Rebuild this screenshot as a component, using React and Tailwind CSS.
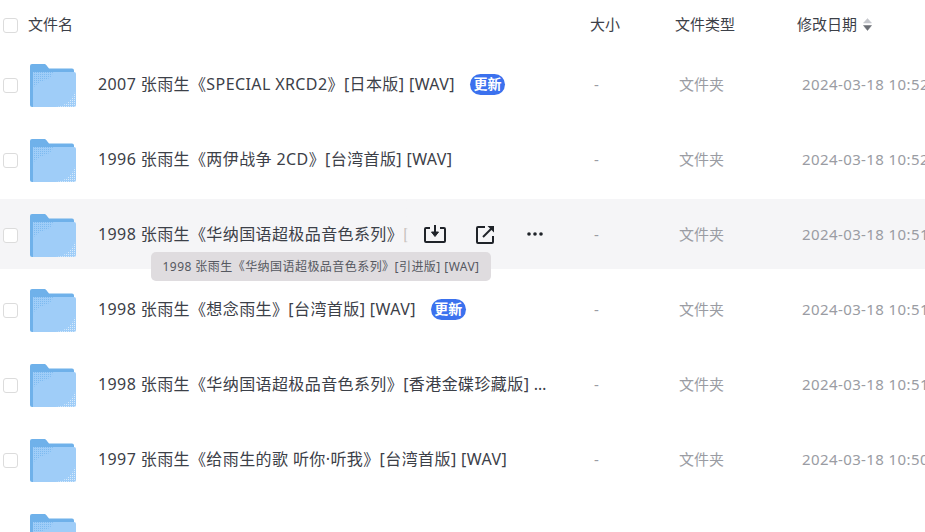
const FONT = '"Noto Sans","Noto Sans CJK SC",sans-serif';

const rows = [
  { name: "2007 张雨生《SPECIAL XRCD2》[日本版] [WAV]", date: "2024-03-18 10:52", badge: true },
  { name: "1996 张雨生《两伊战争 2CD》[台湾首版] [WAV]", date: "2024-03-18 10:52" },
  { name: "1998 张雨生《华纳国语超极品音色系列》[引进版] [WAV]", date: "2024-03-18 10:51", hover: true },
  { name: "1998 张雨生《想念雨生》[台湾首版] [WAV]", date: "2024-03-18 10:51", badge: true },
  { name: "1998 张雨生《华纳国语超极品音色系列》[香港金碟珍藏版] [WAV]", date: "2024-03-18 10:51" },
  { name: "1997 张雨生《给雨生的歌 听你·听我》[台湾首版] [WAV]", date: "2024-03-18 10:50" },
];

function Folder() {
  return (
    <svg width="46" height="43" viewBox="0 0 46 43" className="shrink-0 mt-[2px]">
      <defs>
        <pattern id="dots" width="2" height="2" patternUnits="userSpaceOnUse">
          <rect width="1" height="1" fill="#7dbaf0" />
        </pattern>
        <pattern id="dotsw" width="2" height="2" patternUnits="userSpaceOnUse">
          <rect width="1" height="1" fill="#d6eafc" />
        </pattern>
      </defs>
      <path d="M0 2a2 2 0 0 1 2-2h12c1.500 0 2 .5 3 2l2 2.500h23a2 2 0 0 1 2 2V12H0Z" fill="#6fb1ea" />
      <path d="M3 8h41a2 2 0 0 1 2 2v31a2 2 0 0 1-2 2H3Z" fill="#9fcdf8" />
      <path d="M0 2h3v41H2a2 2 0 0 1-2-2Z" fill="#6fb1ea" />
      <path d="M3 8h20q-1 6-8 8t-12 8Z" fill="url(#dots)" />
      <path d="M46 26v14a3 3 0 0 1-3 3H26q8-1 13-6t7-11Z" fill="url(#dotsw)" />
    </svg>
  );
}

function Check() {
  return <span className="block w-[15px] h-[15px] mt-[2px] shrink-0 rounded-[3px] border border-[#dcdcdc] bg-white" />;
}

function Badge() {
  return (
    <span className="ml-[15px] flex items-center justify-center w-[35px] h-[21px] rounded-full bg-[#3b71ee] text-white text-[14px] tracking-normal font-bold leading-none">
      更新
    </span>
  );
}

function Actions() {
  return (
    <div className="absolute left-[398px] top-0 h-full w-[162px] flex items-center">
      <div className="absolute left-0 top-0 h-full w-[10px] bg-linear-to-r from-[#f5f5f700] to-[#f5f5f7]" />
      <div className="absolute left-[10px] top-0 h-full right-0 bg-[#f5f5f7]" />
      <div className="relative flex items-center pl-[26px]">
        <svg width="22" height="20" viewBox="0 0 22 20" fill="none" stroke="#1f2329" strokeWidth="2" className="shrink-0">
          <path d="M6 4H2a1 1 0 0 0-1 1v12a1 1 0 0 0 1 1h18a1 1 0 0 0 1-1V5a1 1 0 0 0-1-1h-4" />
          <path d="M11 1v9" />
          <path d="M7.500 8h7L11 12.500Z" fill="#1f2329" strokeWidth="1" />
        </svg>
        <svg width="19" height="19" viewBox="0 0 19 19" fill="none" stroke="#1f2329" strokeWidth="2" className="ml-[30px] shrink-0">
          <path d="M9 2H2a1 1 0 0 0-1 1v14a1 1 0 0 0 1 1h14a1 1 0 0 0 1-1v-6" />
          <path d="M7 12 17 2" />
          <path d="M11.500 1H18v6.500Z" fill="#1f2329" stroke="none" />
        </svg>
        <svg width="16" height="4" viewBox="0 0 16 4" fill="#1f2329" className="ml-[32px] shrink-0">
          <circle cx="2" cy="2" r="1.800" />
          <circle cx="8" cy="2" r="1.800" />
          <circle cx="14" cy="2" r="1.800" />
        </svg>
      </div>
    </div>
  );
}

function Row({ r }) {
  return (
    <div className={`relative h-[70px] shrink-0 flex items-center ${r.hover ? "bg-[#f5f5f7]" : "bg-white"}`}>
      <div className="w-[30px] pl-[3px] shrink-0"><Check /></div>
      <div className="w-[68px] shrink-0 flex items-center"><Folder /></div>
      <div className="w-[492px] shrink-0 flex items-center text-[16px] tracking-[0.4px] text-[#3c4048]">
        {r.badge ? (
          <span className="whitespace-nowrap">{r.name}</span>
        ) : (
          <span className="block w-[449px] truncate whitespace-nowrap">{r.name}</span>
        )}
        {r.badge && <Badge />}
      </div>
      <div className="w-[85px] shrink-0 pl-[4px] text-[15px] text-[#9a9ca3]">-</div>
      <div className="w-[122px] shrink-0 pl-[4px] text-[15px] text-[#9a9ca3]">文件夹</div>
      <div className="pl-[5px] text-[15px] tracking-[0.4px] text-[#9a9ca3] whitespace-nowrap">{r.date}</div>
      {r.hover && <Actions />}
      {r.hover && (
        <div className="absolute left-[151px] top-[53px] z-10 h-[29px] w-[340px] flex items-center justify-center rounded-[5px] bg-[#dfdcdf] text-[12px] tracking-[0.45px] text-[#55585f] whitespace-nowrap">
          {r.name}
        </div>
      )}
    </div>
  );
}

export default function App() {
  return (
    <div className="w-[925px] h-[532px] overflow-hidden bg-white" style={{ fontFamily: FONT }}>
      <div className="h-[49px] flex items-center text-[15px] text-[#3c4048]">
        <div className="w-[28px] pl-[3px] shrink-0"><Check /></div>
        <div className="w-[562px] shrink-0">文件名</div>
        <div className="w-[85px] shrink-0">大小</div>
        <div className="w-[122px] shrink-0">文件类型</div>
        <div className="flex items-center">
          修改日期
          <svg width="9" height="13" viewBox="0 0 9 13" className="ml-[6px]">
            <path d="M4.500 .5 8.500 5h-8Z" fill="#c4c6cc" stroke="#c4c6cc" strokeWidth=".5" strokeLinejoin="round" />
            <path d="M4.500 12.500 .5 7.500h8Z" fill="#6b6e75" stroke="#6b6e75" strokeWidth=".5" strokeLinejoin="round" />
          </svg>
        </div>
      </div>
      <div className="flex flex-col gap-[5px]">
        {rows.map((r, i) => <Row key={i} r={r} />)}
        <div className="h-[70px] shrink-0 flex items-center pl-[30px]"><Folder /></div>
      </div>
    </div>
  );
}
